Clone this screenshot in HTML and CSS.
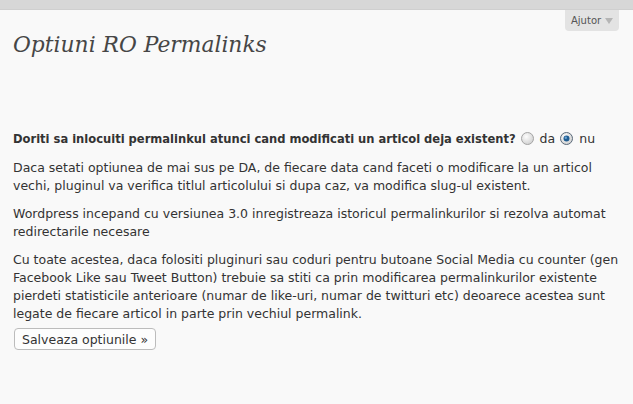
FILE: index.html
```html
<!DOCTYPE html>
<html>
<head>
<meta charset="utf-8">
<link rel="stylesheet" href="styles.css">
</head>
<body>
<div class="topbar"></div>
<div class="help-tab">Ajutor <span class="arrow"></span></div>
<div class="wrap">
  <h2 class="title">Optiuni RO Permalinks</h2>
  <p class="question"><b>Doriti sa inlocuiti permalinkul atunci cand modificati un articol deja existent?</b><span class="radio"><svg width="13" height="13" viewBox="0 0 13 13"><defs><radialGradient id="g1" cx="0.4" cy="0.35" r="0.7"><stop offset="0" stop-color="#fdfdfd"/><stop offset="1" stop-color="#cfcfcf"/></radialGradient></defs><circle cx="6.5" cy="6.5" r="6" fill="url(#g1)" stroke="#a4a4a4"/></svg></span>da<span class="radio"><svg width="13" height="13" viewBox="0 0 13 13"><defs><radialGradient id="g2" cx="0.4" cy="0.35" r="0.7"><stop offset="0" stop-color="#fdfdfd"/><stop offset="1" stop-color="#cfcfcf"/></radialGradient></defs><circle cx="6.5" cy="6.5" r="6" fill="url(#g2)" stroke="#5a6a7a"/><circle cx="6.5" cy="6.5" r="3" fill="#1f5d92"/><circle cx="5.8" cy="5.8" r="1.2" fill="#6aa3d3"/></svg></span>nu</p>
  <p>Daca setati optiunea de mai sus pe DA, de fiecare data cand faceti o modificare la un articol<br>vechi, pluginul va verifica titlul articolului si dupa caz, va modifica slug-ul existent.</p>
  <p>Wordpress incepand cu versiunea 3.0 inregistreaza istoricul permalinkurilor si rezolva automat<br>redirectarile necesare</p>
  <p class="last">Cu toate acestea, daca folositi pluginuri sau coduri pentru butoane Social Media cu counter (gen<br>Facebook Like sau Tweet Button) trebuie sa stiti ca prin modificarea permalinkurilor existente<br>pierdeti statisticile anterioare (numar de like-uri, numar de twitturi etc) deoarece acestea sunt<br>legate de fiecare articol in parte prin vechiul permalink.</p>
  <div class="actions"><button class="btn">Salveaza optiunile »</button></div>
</div>
</body>
</html>
```
FILE: styles.css
```css
html, body {
  margin: 0;
  padding: 0;
  background: #f9f9f9;
}
body {
  font-family: "DejaVu Sans", Verdana, sans-serif;
  font-size: 12.5px;
  color: #333;
  position: relative;
  width: 633px;
  height: 404px;
  overflow: hidden;
}
.topbar {
  height: 9px;
  background: #d7d7d7;
  border-bottom: 1px solid #cfcfcf;
}
.help-tab {
  position: absolute;
  top: 10px;
  right: 14px;
  width: 54px;
  height: 21px;
  box-sizing: border-box;
  background: #e3e3e3;
  border-radius: 0 0 4px 4px;
  color: #555;
  font-size: 10px;
  line-height: 21px;
  padding-left: 6px;
}
.help-tab .arrow {
  display: inline-block;
  width: 0;
  height: 0;
  border-left: 4px solid transparent;
  border-right: 4px solid transparent;
  border-top: 6px solid #b5b5b5;
  vertical-align: middle;
  margin-left: 1px;
}
.wrap {
  padding: 0 0 0 13px;
}
.title {
  margin: 0;
  padding: 19px 0 0;
  font-family: "DejaVu Serif", Georgia, serif;
  font-style: italic;
  font-weight: normal;
  font-size: 21.8px;
  line-height: 32px;
  color: #464646;
}
p {
  margin: 0 0 10px;
  line-height: 18px;
  white-space: nowrap;
}
p.last {
  margin-bottom: 5px;
}
.question {
  margin-top: 69px;
  margin-bottom: 11px;
}
.question b {
  font-family: "DejaVu Sans Condensed", "DejaVu Sans", sans-serif;
  font-weight: bold;
  font-size: 12.8px;
}
.radio {
  display: inline-block;
  vertical-align: -2px;
  margin: 0 6px 0 5px;
}
.radio svg { display: block; }
.btn {
  font-family: "DejaVu Sans", Verdana, sans-serif;
  font-size: 12.5px;
  color: #333;
  background: #fdfdfd;
  border: 1px solid #bcbcbc;
  border-radius: 4px;
  height: 22px;
  padding: 0 7px;
  margin-left: 1px;
}
```
